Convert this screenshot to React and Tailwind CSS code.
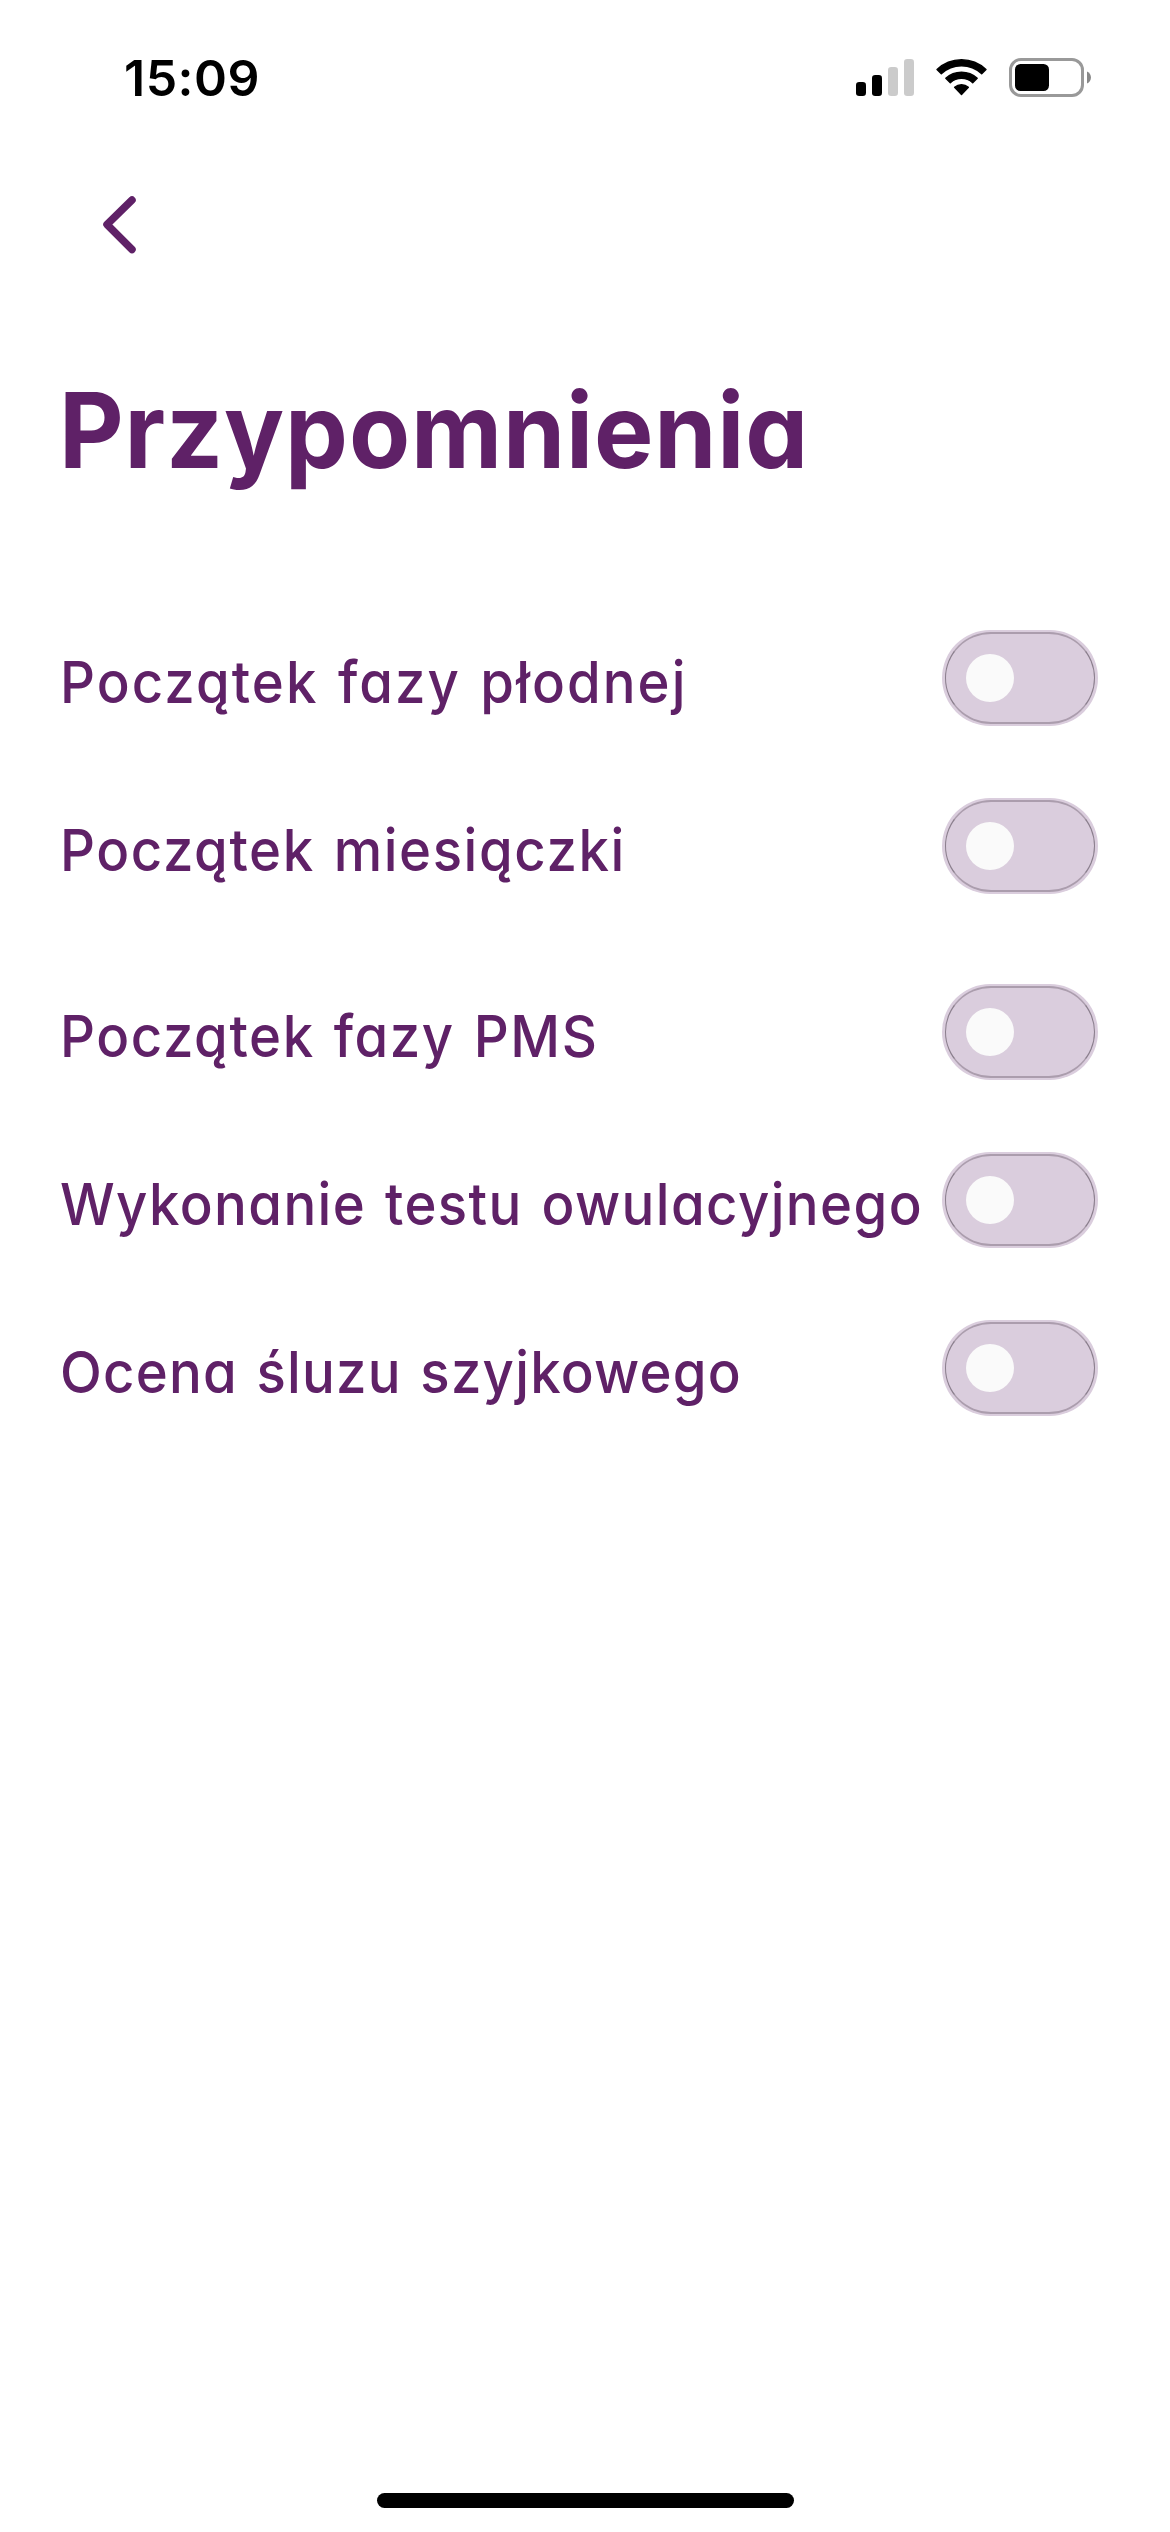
import React from 'react';

const reminders = [
  { label: 'Początek fazy płodnej', row: 'h-[168px]', text: 'tracking-[2.2px]' },
  { label: 'Początek miesiączki', row: 'h-[186px]', text: 'tracking-[1.7px]' },
  { label: 'Początek fazy PMS', row: 'h-[168px]', text: 'tracking-[1.7px]' },
  { label: 'Wykonanie testu owulacyjnego', row: 'h-[168px]', text: 'tracking-[1.5px]' },
  { label: 'Ocena śluzu szyjkowego', row: 'h-[168px]', text: 'tracking-[1.3px]' },
];

const StatusBar = () => (
  <header className="flex h-[156px] items-start justify-between pl-[124px] pr-[79px]">
    <div className="mt-[46px] text-[50px] leading-[64px] font-semibold tracking-[0.5px] text-black">15:09</div>
    <div className="mt-[58px] flex h-[40px]">
      <svg className="h-[40px] w-[58px]" viewBox="0 0 58 40">
        <rect x="0" y="24" width="10" height="14" rx="3.2" fill="#000" />
        <rect x="16" y="17" width="10" height="21" rx="3.2" fill="#000" />
        <rect x="32" y="9" width="10" height="29" rx="3.2" fill="#cbcbcb" />
        <rect x="48" y="1" width="10" height="37" rx="3.2" fill="#cbcbcb" />
      </svg>
      <svg className="ml-[22px] h-[40px] w-[51px]" viewBox="0 0 51 40">
        <path
          d="M1 11.5a35.5 35.5 0 0 1 49 0l-4.3 4.3a29.5 29.5 0 0 0-40.4 0z M9.800 20.3a23 23 0 0 1 31.4 0l-4.5 4.5a16.5 16.5 0 0 0-22.4 0z M18.6 29.2a11 11 0 0 1 13.8 0l-6.9 7.3z"
          stroke="#000"
          strokeWidth="1.4"
          strokeLinejoin="round"
        />
      </svg>
      <svg className="ml-[22px] h-[40px] w-[82px]" viewBox="0 0 82 40">
        <rect x="1.5" y="1.5" width="72" height="36" rx="10.5" fill="none" stroke="#999" strokeWidth="3" />
        <rect x="6" y="6" width="34" height="27" rx="5.5" />
        <path d="M78 13.5c5.3 2 5.3 10 0 12z" fill="#888" />
      </svg>
    </div>
  </header>
);

const Toggle = () => (
  <button
    type="button"
    role="switch"
    aria-checked="false"
    className="flex h-24 w-[156px] shrink-0 rounded-full bg-[#dacddd] px-[3px] py-[2px]"
  >
    <span className="flex h-full w-full items-center rounded-full border-x border-y-2 border-x-[#8a7e8c] border-y-[#ab9dad] pl-5">
      <span className="h-12 w-12 rounded-full bg-[#fafafa]" />
    </span>
  </button>
);

export default function App() {
  return (
    <div className="flex h-[2532px] w-[1170px] flex-col overflow-hidden bg-white font-['Inter',sans-serif] text-[#5f2167]">
      <StatusBar />

      <button type="button" aria-label="Wstecz" className="ml-[100px] mt-[36px] h-[66px] w-[40px]">
        <svg className="h-[66px] w-[40px]" viewBox="0 0 40 66" fill="none" stroke="currentColor" strokeWidth="7.5" strokeLinecap="round" strokeLinejoin="round">
          <path d="M32 8 7 32.5l25 25" />
        </svg>
      </button>

      <h1 className="ml-[59px] mt-[107px] h-[130px] origin-left scale-x-96 text-[104px] leading-[130px] font-bold tracking-[0.9px] whitespace-nowrap [font-feature-settings:'cv11']">
        Przypomnienia
      </h1>

      <main className="mt-[135px] pl-[60px] pr-[72px]">
        {reminders.map(({ label, row, text }) => (
          <div key={label} className={`flex items-start ${row}`}>
            <span
              className={`mt-[16px] min-w-0 flex-1 origin-left scale-x-94 text-[58px] leading-[72px] font-medium whitespace-nowrap [font-feature-settings:'cv11'] [word-spacing:3px] ${text}`}
            >
              {label}
            </span>
            <Toggle />
          </div>
        ))}
      </main>

      <div className="mx-auto mt-auto mb-[24px] h-[15px] w-[417px] rounded-full bg-black" />
    </div>
  );
}
